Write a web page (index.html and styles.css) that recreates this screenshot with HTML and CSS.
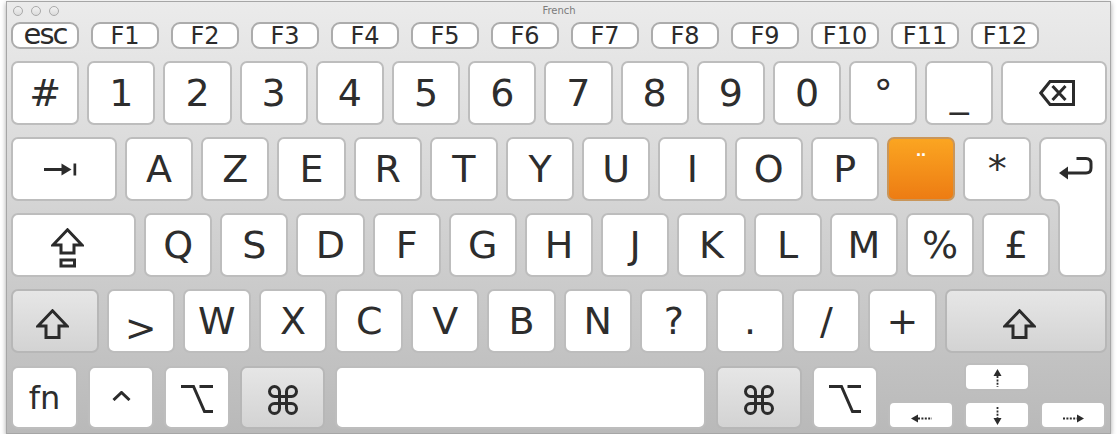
FILE: index.html
```html
<!DOCTYPE html>
<html lang="fr">
<head>
    <meta charset="UTF-8">
    <meta name="viewport" content="width=device-width, initial-scale=1.0">
    <title>French</title>
    <link rel="stylesheet" href="styles.css">
</head>
<body>

<div class="viewer">
    <div class="titlebar">
        <div class="lights">
            <span class="light"></span>
            <span class="light"></span>
            <span class="light"></span>
        </div>
        <div class="title">French</div>
    </div>

    <!-- function keys -->
    <div class="row fn-row">
        <div class="fkey esc">esc</div>
        <div class="fkey">F1</div>
        <div class="fkey">F2</div>
        <div class="fkey">F3</div>
        <div class="fkey">F4</div>
        <div class="fkey">F5</div>
        <div class="fkey">F6</div>
        <div class="fkey">F7</div>
        <div class="fkey">F8</div>
        <div class="fkey">F9</div>
        <div class="fkey">F10</div>
        <div class="fkey">F11</div>
        <div class="fkey">F12</div>
    </div>

    <!-- number row -->
    <div class="row">
        <div class="key">#</div>
        <div class="key">1</div>
        <div class="key">2</div>
        <div class="key">3</div>
        <div class="key">4</div>
        <div class="key">5</div>
        <div class="key">6</div>
        <div class="key">7</div>
        <div class="key">8</div>
        <div class="key">9</div>
        <div class="key">0</div>
        <div class="key">°</div>
        <div class="key">_</div>
        <div class="key fill delete">
            <svg width="36" height="26" viewBox="0 0 36 26">
                <path class="glyph" d="M1.8 13 L11 1.5 H34.5 V24.5 H11 Z"/>
                <path class="glyph" d="M13.5 6 L26.5 20 M26.5 6 L13.5 20" stroke-width="3.2"/>
            </svg>
        </div>
    </div>

    <!-- letter rows share the return key -->
    <div class="letters">
        <div class="row top">
            <div class="key tab">
                <svg width="33" height="13" viewBox="0 0 33 13">
                    <path class="glyph" d="M0 6.5 H19" stroke-width="2.6"/>
                    <path class="solid" d="M17.5 0.5 L27.5 6.5 L17.5 12.5 Z"/>
                    <rect class="solid" x="29.5" y="0.5" width="2.7" height="12"/>
                </svg>
            </div>
            <div class="key">A</div>
            <div class="key">Z</div>
            <div class="key">E</div>
            <div class="key">R</div>
            <div class="key">T</div>
            <div class="key">Y</div>
            <div class="key">U</div>
            <div class="key">I</div>
            <div class="key">O</div>
            <div class="key">P</div>
            <div class="key dead">¨</div>
            <div class="key">*</div>
        </div>

        <svg class="return" width="68" height="140" viewBox="0 0 68 140">
            <path class="return-cap" d="M8 1 H60 A7 7 0 0 1 67 8 V132 A7 7 0 0 1 60 139 H27 A7 7 0 0 1 20 132 V70 A7 7 0 0 0 13 63 H8 A7 7 0 0 1 1 56 V8 A7 7 0 0 1 8 1 Z"/>
            <path class="glyph" d="M37.5 21.5 H47 Q52 21.5 52 26.5 V31 Q52 36 47 36 H27" stroke-width="3.2"/>
            <path class="solid" d="M20 36 L29 29.5 L29 42.5 Z"/>
        </svg>

        <div class="row bottom">
            <div class="key caps">
                <svg width="33" height="40" viewBox="0 0 33 40">
                    <path class="glyph" d="M16.5 1.8 L31 17 H23 V25 H10 V17 H2 Z" stroke-width="2.6"/>
                    <rect class="glyph" x="10" y="32" width="13.5" height="6" stroke-width="2.6"/>
                </svg>
            </div>
            <div class="key">Q</div>
            <div class="key">S</div>
            <div class="key">D</div>
            <div class="key">F</div>
            <div class="key">G</div>
            <div class="key">H</div>
            <div class="key">J</div>
            <div class="key">K</div>
            <div class="key">L</div>
            <div class="key">M</div>
            <div class="key">%</div>
            <div class="key">£</div>
        </div>
    </div>

    <!-- shift row -->
    <div class="row">
        <div class="key mod shift-left">
            <svg width="33" height="30" viewBox="0 0 33 30">
                <path class="glyph" d="M16.5 1.8 L31 17 H23 V28.5 H10 V17 H2 Z" stroke-width="2.6"/>
            </svg>
        </div>
        <div class="key gt">&gt;</div>
        <div class="key">W</div>
        <div class="key">X</div>
        <div class="key">C</div>
        <div class="key">V</div>
        <div class="key">B</div>
        <div class="key">N</div>
        <div class="key">?</div>
        <div class="key">.</div>
        <div class="key">/</div>
        <div class="key">+</div>
        <div class="key mod fill shift-right">
            <svg width="33" height="30" viewBox="0 0 33 30">
                <path class="glyph" d="M16.5 1.8 L31 17 H23 V28.5 H10 V17 H2 Z" stroke-width="2.6"/>
            </svg>
        </div>
    </div>

    <!-- bottom row -->
    <div class="row last">
        <div class="key fn w67">fn</div>
        <div class="key w66 ctrl">
            <svg width="19" height="10" viewBox="0 0 19 10">
                <path class="glyph" d="M1.5 9 L9.5 1.5 L17.5 9" stroke-width="2.6"/>
            </svg>
        </div>
        <div class="key w66 opt">
            <svg width="32" height="28" viewBox="0 0 32 28">
                <path class="glyph" d="M0 1.5 H12.5 L23.5 26.5 H32 M18.5 1.5 H32" stroke-width="3"/>
            </svg>
        </div>
        <div class="key mod w85 cmd">
            <svg width="30" height="30" viewBox="0 0 30 30">
                <path class="glyph" d="M11.5 11.5 V6.5 A5 5 0 1 0 6.5 11.5 H23.5 A5 5 0 1 0 18.5 6.5 V23.5 A5 5 0 1 0 23.5 18.5 H6.5 A5 5 0 1 0 11.5 23.5 Z" stroke-width="2.8"/>
            </svg>
        </div>
        <div class="key space"></div>
        <div class="key mod w86 cmd">
            <svg width="30" height="30" viewBox="0 0 30 30">
                <path class="glyph" d="M11.5 11.5 V6.5 A5 5 0 1 0 6.5 11.5 H23.5 A5 5 0 1 0 18.5 6.5 V23.5 A5 5 0 1 0 23.5 18.5 H6.5 A5 5 0 1 0 11.5 23.5 Z" stroke-width="2.8"/>
            </svg>
        </div>
        <div class="key w66 opt">
            <svg width="32" height="28" viewBox="0 0 32 28">
                <path class="glyph" d="M0 1.5 H12.5 L23.5 26.5 H32 M18.5 1.5 H32" stroke-width="3"/>
            </svg>
        </div>
        <div class="arrows">
            <div class="akey up">
                <svg width="9" height="18" viewBox="0 0 9 18">
                    <path class="solid" d="M4.5 0 L8.5 7 L0.5 7 Z"/>
                    <path class="dots" d="M4.5 7 V18"/>
                </svg>
            </div>
            <div class="akey left">
                <svg width="21" height="9" viewBox="0 0 21 9">
                    <path class="solid" d="M0 4.5 L7 0.5 L7 8.5 Z"/>
                    <path class="dots" d="M7 4.5 H21"/>
                </svg>
            </div>
            <div class="akey down">
                <svg width="9" height="18" viewBox="0 0 9 18">
                    <path class="dots" d="M4.5 0 V11"/>
                    <path class="solid" d="M4.5 18 L8.5 11 L0.5 11 Z"/>
                </svg>
            </div>
            <div class="akey right">
                <svg width="21" height="9" viewBox="0 0 21 9">
                    <path class="dots" d="M0 4.5 H14"/>
                    <path class="solid" d="M21 4.5 L14 0.5 L14 8.5 Z"/>
                </svg>
            </div>
        </div>
    </div>
</div>

</body>
</html>
```

FILE: styles.css
```css
body {
    margin: 0;
    background: #fff;
    font-family: 'DejaVu Sans', sans-serif;
}

.viewer {
    box-sizing: border-box;
    width: 1105px;
    margin: 1px 0 0 6px;
    padding: 0 3px 4px 4px;
    border: 1px solid #a6a6a6;
    background: linear-gradient(#ebebeb 0%, #dddddd 30%, #cbcbcb 65%, #b9b9b9 100%);
    box-shadow: 0 2px 5px rgba(0, 0, 0, 0.35);
}

/* title bar */
.titlebar {
    height: 20px;
    display: grid;
    grid-template-columns: 1fr auto 1fr;
    align-items: start;
}

.lights {
    display: flex;
    gap: 8px;
    padding: 4px 0 0 2px;
}

.light {
    box-sizing: border-box;
    width: 10px;
    height: 10px;
    border-radius: 50%;
    border: 1px solid #a9a9a9;
    background: linear-gradient(#f2f2f2, #dcdcdc);
}

.title {
    font-size: 10px;
    line-height: 12px;
    padding-top: 3px;
    color: #7b7b7b;
}

/* rows */
.row {
    display: flex;
    gap: 8px;
    margin-top: 12px;
}

.fn-row {
    gap: 12px;
    margin-top: 0;
}

.fkey {
    box-sizing: border-box;
    width: 68px;
    height: 27px;
    background: #fff;
    border: 2px solid #acacac;
    border-radius: 9px;
    display: flex;
    align-items: center;
    justify-content: center;
    font-size: 24px;
    color: #2b2b2b;
}

.esc {
    font-size: 29px;
    letter-spacing: -2px;
    padding-bottom: 3px;
}

.key {
    box-sizing: border-box;
    flex: none;
    width: 68.2px;
    height: 64px;
    background: #fff;
    border: 2px solid #bdbdbd;
    border-radius: 7px;
    display: flex;
    align-items: center;
    justify-content: center;
    font-size: 38px;
    color: #2d2d2d;
}

.key.fill {
    flex: 1;
}

.mod {
    background: linear-gradient(#e6e6e6, #d3d3d3);
    border-color: #b7b7b7;
}

.dead {
    background: linear-gradient(#fba521, #ed7c13);
    border-color: #c9965a;
    color: #fff;
    font-size: 26px;
    padding-bottom: 8px;
}

.gt {
    padding-top: 14px;
}

/* svg glyphs */
.glyph {
    fill: none;
    stroke: #2b2b2b;
    stroke-width: 3;
}

.solid {
    fill: #2b2b2b;
}

.dots {
    fill: none;
    stroke: #2b2b2b;
    stroke-width: 1.8;
    stroke-dasharray: 2 1.4;
}

.delete {
    padding-left: 6px;
}

.tab {
    width: 106px;
    padding-right: 8px;
}

.caps {
    width: 125px;
    padding: 6px 12px 0 0;
}

.shift-left {
    width: 87.5px;
    padding: 6px 4px 0 0;
}

.shift-right {
    padding: 6px 13px 0 0;
}

/* letters block with the tall return key */
.letters {
    display: grid;
    grid-template-columns: 1fr 68px;
    grid-template-rows: 64px 64px;
    row-gap: 12px;
    margin-top: 12px;
}

.letters .row {
    margin-top: 0;
}

.letters .top {
    grid-column: 1;
    grid-row: 1;
}

.letters .bottom {
    grid-column: 1 / 3;
    grid-row: 2;
}

.return {
    grid-column: 2;
    grid-row: 1 / 3;
    display: block;
}

.return-cap {
    fill: #fff;
    stroke: #bdbdbd;
    stroke-width: 2;
}

/* bottom row */
.last {
    gap: 10px;
    margin-top: 10px;
    align-items: flex-end;
}

.last .key {
    height: 63px;
}

.w66 { width: 66px; }
.w67 { width: 67px; }
.w85 { width: 85px; }
.w86 { width: 86px; }

.fn {
    font-size: 32px;
}

.ctrl {
    padding-bottom: 4px;
}

.opt {
    padding-top: 3px;
}

.cmd {
    padding-top: 5px;
}

.space {
    width: 371px;
}

.arrows {
    display: grid;
    grid-template-columns: 66px 66px 66px;
    grid-template-rows: 28px 28px;
    gap: 10px;
}

.akey {
    box-sizing: border-box;
    background: #fff;
    border: 2px solid #bdbdbd;
    border-radius: 6px;
    display: flex;
    align-items: center;
    justify-content: center;
}

.up {
    grid-column: 2;
    grid-row: 1;
    padding-top: 2px;
}

.left {
    grid-column: 1;
    grid-row: 2;
    padding-top: 6px;
}

.down {
    grid-column: 2;
    grid-row: 2;
    padding-top: 2px;
}

.right {
    grid-column: 3;
    grid-row: 2;
    padding-top: 6px;
}
```
